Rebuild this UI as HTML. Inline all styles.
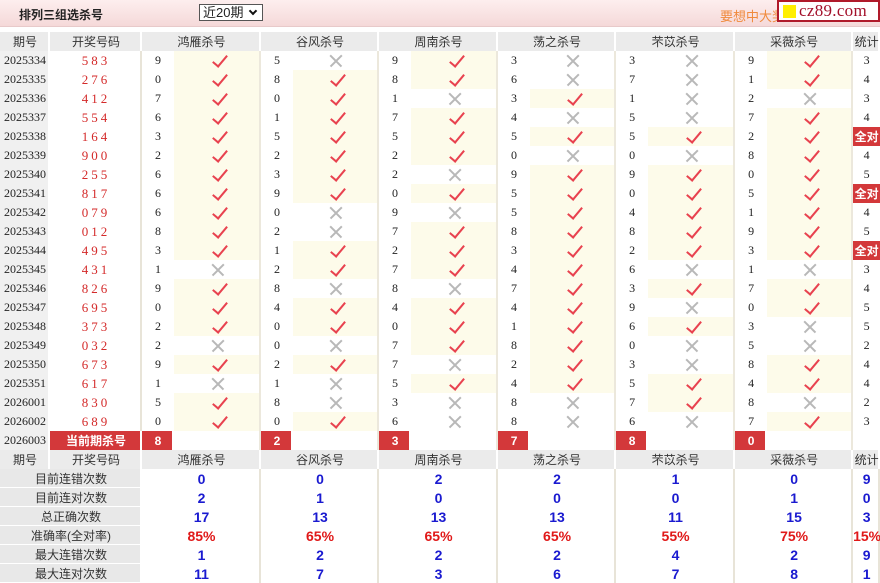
<!DOCTYPE html>
<html><head><meta charset="utf-8">
<style>
*{margin:0;padding:0;box-sizing:border-box}
body{width:880px;height:581px;overflow:hidden;background:#fff;font-family:"Liberation Serif","Noto Sans CJK SC",serif;font-size:12px;color:#222}
.top{position:absolute;left:0;top:0;width:880px;height:27px;background:linear-gradient(#fdeeee,#f5d9d9);border-bottom:1px solid #e8caca}
.title{position:absolute;left:19px;top:6px;font:bold 12px "Liberation Sans","Noto Sans CJK SC",sans-serif;color:#222}
.sel{position:absolute;left:199px;top:4px;width:64px;height:17px;border:1px solid #555;background:#fff;font:13px "Liberation Sans","Noto Sans CJK SC",sans-serif;padding-left:3px;line-height:15px}
.sel b{position:absolute;right:6px;top:3px;width:6px;height:6px;border-right:2px solid #111;border-bottom:2px solid #111;transform:rotate(45deg)}
.ad{position:absolute;left:720px;top:6px;font:13px "Liberation Sans","Noto Sans CJK SC",sans-serif;color:#f08a3c}
.logo{position:absolute;left:777px;top:0;width:103px;height:22px;border:2px solid #b01a2a;background:#fff;font:17px "Liberation Serif",serif;color:#a3102a;line-height:18px;padding-left:20px;letter-spacing:0.3px;overflow:hidden;white-space:nowrap}
.logo i{position:absolute;left:4px;top:3px;width:13px;height:13px;background:#ffef00}
table{position:absolute;left:0;top:32px;border-collapse:separate;border-spacing:0;table-layout:fixed;width:880px}
td{height:19px;padding:0;text-align:center;vertical-align:middle;white-space:nowrap;overflow:hidden;position:relative}
tr.h td{background:#ebebeb;font-family:"Liberation Sans","Noto Sans CJK SC",sans-serif;color:#333;box-shadow:inset -2px 0 #fff}
td.p{background:#f0f0f0;box-shadow:inset -2px 0 #fff}
td.d{color:#d42a2a;letter-spacing:3px;font-size:13px;box-shadow:inset -2px 0 #e8e4d8}
td.m{box-shadow:inset -2px 0 #ece8dc}
td.y{background:#fdfbea}
td.ok::after{content:"";position:absolute;left:50%;top:50%;width:6px;height:13px;margin:-9px 0 0 -2px;border-right:2px solid #e8424f;border-bottom:2px solid #e8424f;transform:rotate(40deg)}
td.no::before,td.no::after{content:"";position:absolute;left:50%;top:50%;width:16px;height:1.5px;margin:-1px 0 0 -8px;background:#b8b8b8;transform:rotate(45deg)}
td.no::after{transform:rotate(-45deg)}
td.r{background:#d3383a;color:#fff;font-weight:bold;font-family:"Liberation Sans","Noto Sans CJK SC",sans-serif;box-shadow:inset -2px 0 #fff}
td.qd{background:#d3383a;color:#fff;font-weight:bold;font-family:"Liberation Sans","Noto Sans CJK SC",sans-serif}
td.lb{background:#e8e8e8;font-family:"Liberation Sans","Noto Sans CJK SC",sans-serif;color:#333;box-shadow:inset -2px 0 #fff,inset 0 -1px #fff}
td.v{font:bold 14px "Liberation Sans",sans-serif;color:#1a1ad0;box-shadow:inset -2px 0 #e8e4d8}
td.v.red{color:#e01818}
</style></head><body>
<div class="top"></div>
<div class="title">排列三组选杀号</div>
<div class="sel">近20期<b></b></div>
<div class="ad">要想中大奖</div>
<div class="logo"><i></i>cz89.com</div>
<table>
<col style="width:50px"><col style="width:92px">
<col style="width:32px"><col style="width:87px">
<col style="width:32px"><col style="width:86px">
<col style="width:32px"><col style="width:87px">
<col style="width:32px"><col style="width:86px">
<col style="width:32px"><col style="width:87px">
<col style="width:32px"><col style="width:86px">
<col style="width:27px">
<tr class="h"><td>期号</td><td>开奖号码</td><td colspan="2">鸿雁杀号</td><td colspan="2">谷风杀号</td><td colspan="2">周南杀号</td><td colspan="2">荡之杀号</td><td colspan="2">芣苡杀号</td><td colspan="2">采薇杀号</td><td>统计</td></tr>
<tr><td class="p">2025334</td><td class="d">583</td><td>9</td><td class="m y ok"></td><td>5</td><td class="m no"></td><td>9</td><td class="m y ok"></td><td>3</td><td class="m no"></td><td>3</td><td class="m no"></td><td>9</td><td class="m y ok"></td><td>3</td></tr>
<tr><td class="p">2025335</td><td class="d">276</td><td>0</td><td class="m y ok"></td><td>8</td><td class="m y ok"></td><td>8</td><td class="m y ok"></td><td>6</td><td class="m no"></td><td>7</td><td class="m no"></td><td>1</td><td class="m y ok"></td><td>4</td></tr>
<tr><td class="p">2025336</td><td class="d">412</td><td>7</td><td class="m y ok"></td><td>0</td><td class="m y ok"></td><td>1</td><td class="m no"></td><td>3</td><td class="m y ok"></td><td>1</td><td class="m no"></td><td>2</td><td class="m no"></td><td>3</td></tr>
<tr><td class="p">2025337</td><td class="d">554</td><td>6</td><td class="m y ok"></td><td>1</td><td class="m y ok"></td><td>7</td><td class="m y ok"></td><td>4</td><td class="m no"></td><td>5</td><td class="m no"></td><td>7</td><td class="m y ok"></td><td>4</td></tr>
<tr><td class="p">2025338</td><td class="d">164</td><td>3</td><td class="m y ok"></td><td>5</td><td class="m y ok"></td><td>5</td><td class="m y ok"></td><td>5</td><td class="m y ok"></td><td>5</td><td class="m y ok"></td><td>2</td><td class="m y ok"></td><td class="qd">全对</td></tr>
<tr><td class="p">2025339</td><td class="d">900</td><td>2</td><td class="m y ok"></td><td>2</td><td class="m y ok"></td><td>2</td><td class="m y ok"></td><td>0</td><td class="m no"></td><td>0</td><td class="m no"></td><td>8</td><td class="m y ok"></td><td>4</td></tr>
<tr><td class="p">2025340</td><td class="d">255</td><td>6</td><td class="m y ok"></td><td>3</td><td class="m y ok"></td><td>2</td><td class="m no"></td><td>9</td><td class="m y ok"></td><td>9</td><td class="m y ok"></td><td>0</td><td class="m y ok"></td><td>5</td></tr>
<tr><td class="p">2025341</td><td class="d">817</td><td>6</td><td class="m y ok"></td><td>9</td><td class="m y ok"></td><td>0</td><td class="m y ok"></td><td>5</td><td class="m y ok"></td><td>0</td><td class="m y ok"></td><td>5</td><td class="m y ok"></td><td class="qd">全对</td></tr>
<tr><td class="p">2025342</td><td class="d">079</td><td>6</td><td class="m y ok"></td><td>0</td><td class="m no"></td><td>9</td><td class="m no"></td><td>5</td><td class="m y ok"></td><td>4</td><td class="m y ok"></td><td>1</td><td class="m y ok"></td><td>4</td></tr>
<tr><td class="p">2025343</td><td class="d">012</td><td>8</td><td class="m y ok"></td><td>2</td><td class="m no"></td><td>7</td><td class="m y ok"></td><td>8</td><td class="m y ok"></td><td>8</td><td class="m y ok"></td><td>9</td><td class="m y ok"></td><td>5</td></tr>
<tr><td class="p">2025344</td><td class="d">495</td><td>3</td><td class="m y ok"></td><td>1</td><td class="m y ok"></td><td>2</td><td class="m y ok"></td><td>3</td><td class="m y ok"></td><td>2</td><td class="m y ok"></td><td>3</td><td class="m y ok"></td><td class="qd">全对</td></tr>
<tr><td class="p">2025345</td><td class="d">431</td><td>1</td><td class="m no"></td><td>2</td><td class="m y ok"></td><td>7</td><td class="m y ok"></td><td>4</td><td class="m y ok"></td><td>6</td><td class="m no"></td><td>1</td><td class="m no"></td><td>3</td></tr>
<tr><td class="p">2025346</td><td class="d">826</td><td>9</td><td class="m y ok"></td><td>8</td><td class="m no"></td><td>8</td><td class="m no"></td><td>7</td><td class="m y ok"></td><td>3</td><td class="m y ok"></td><td>7</td><td class="m y ok"></td><td>4</td></tr>
<tr><td class="p">2025347</td><td class="d">695</td><td>0</td><td class="m y ok"></td><td>4</td><td class="m y ok"></td><td>4</td><td class="m y ok"></td><td>4</td><td class="m y ok"></td><td>9</td><td class="m no"></td><td>0</td><td class="m y ok"></td><td>5</td></tr>
<tr><td class="p">2025348</td><td class="d">373</td><td>2</td><td class="m y ok"></td><td>0</td><td class="m y ok"></td><td>0</td><td class="m y ok"></td><td>1</td><td class="m y ok"></td><td>6</td><td class="m y ok"></td><td>3</td><td class="m no"></td><td>5</td></tr>
<tr><td class="p">2025349</td><td class="d">032</td><td>2</td><td class="m no"></td><td>0</td><td class="m no"></td><td>7</td><td class="m y ok"></td><td>8</td><td class="m y ok"></td><td>0</td><td class="m no"></td><td>5</td><td class="m no"></td><td>2</td></tr>
<tr><td class="p">2025350</td><td class="d">673</td><td>9</td><td class="m y ok"></td><td>2</td><td class="m y ok"></td><td>7</td><td class="m no"></td><td>2</td><td class="m y ok"></td><td>3</td><td class="m no"></td><td>8</td><td class="m y ok"></td><td>4</td></tr>
<tr><td class="p">2025351</td><td class="d">617</td><td>1</td><td class="m no"></td><td>1</td><td class="m no"></td><td>5</td><td class="m y ok"></td><td>4</td><td class="m y ok"></td><td>5</td><td class="m y ok"></td><td>4</td><td class="m y ok"></td><td>4</td></tr>
<tr><td class="p">2026001</td><td class="d">830</td><td>5</td><td class="m y ok"></td><td>8</td><td class="m no"></td><td>3</td><td class="m no"></td><td>8</td><td class="m no"></td><td>7</td><td class="m y ok"></td><td>8</td><td class="m no"></td><td>2</td></tr>
<tr><td class="p">2026002</td><td class="d">689</td><td>0</td><td class="m y ok"></td><td>0</td><td class="m y ok"></td><td>6</td><td class="m no"></td><td>8</td><td class="m no"></td><td>6</td><td class="m no"></td><td>7</td><td class="m y ok"></td><td>3</td></tr>
<tr><td class="p">2026003</td><td class="r">当前期杀号</td><td class="r">8</td><td class="m"></td><td class="r">2</td><td class="m"></td><td class="r">3</td><td class="m"></td><td class="r">7</td><td class="m"></td><td class="r">8</td><td class="m"></td><td class="r">0</td><td class="m"></td><td></td></tr>
<tr class="h"><td>期号</td><td>开奖号码</td><td colspan="2">鸿雁杀号</td><td colspan="2">谷风杀号</td><td colspan="2">周南杀号</td><td colspan="2">荡之杀号</td><td colspan="2">芣苡杀号</td><td colspan="2">采薇杀号</td><td>统计</td></tr>
<tr><td class="lb" colspan="2">目前连错次数</td><td class="v" colspan="2">0</td><td class="v" colspan="2">0</td><td class="v" colspan="2">2</td><td class="v" colspan="2">2</td><td class="v" colspan="2">1</td><td class="v" colspan="2">0</td><td class="v">9</td></tr>
<tr><td class="lb" colspan="2">目前连对次数</td><td class="v" colspan="2">2</td><td class="v" colspan="2">1</td><td class="v" colspan="2">0</td><td class="v" colspan="2">0</td><td class="v" colspan="2">0</td><td class="v" colspan="2">1</td><td class="v">0</td></tr>
<tr><td class="lb" colspan="2">总正确次数</td><td class="v" colspan="2">17</td><td class="v" colspan="2">13</td><td class="v" colspan="2">13</td><td class="v" colspan="2">13</td><td class="v" colspan="2">11</td><td class="v" colspan="2">15</td><td class="v">3</td></tr>
<tr><td class="lb" colspan="2">准确率(全对率)</td><td class="v red" colspan="2">85%</td><td class="v red" colspan="2">65%</td><td class="v red" colspan="2">65%</td><td class="v red" colspan="2">65%</td><td class="v red" colspan="2">55%</td><td class="v red" colspan="2">75%</td><td class="v red">15%</td></tr>
<tr><td class="lb" colspan="2">最大连错次数</td><td class="v" colspan="2">1</td><td class="v" colspan="2">2</td><td class="v" colspan="2">2</td><td class="v" colspan="2">2</td><td class="v" colspan="2">4</td><td class="v" colspan="2">2</td><td class="v">9</td></tr>
<tr><td class="lb" colspan="2">最大连对次数</td><td class="v" colspan="2">11</td><td class="v" colspan="2">7</td><td class="v" colspan="2">3</td><td class="v" colspan="2">6</td><td class="v" colspan="2">7</td><td class="v" colspan="2">8</td><td class="v">1</td></tr>
</table>
</body></html>
